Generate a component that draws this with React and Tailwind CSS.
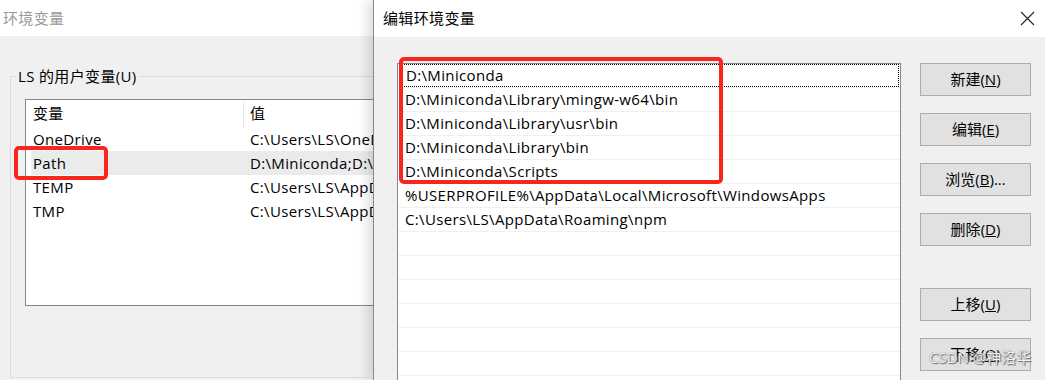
import { useState } from "react";

const FONT = "font-['Open_Sans','Noto_Sans_CJK_SC',sans-serif]";

const userVars = [
  { name: "OneDrive", value: "C:\\Users\\LS\\OneDrive" },
  { name: "Path", value: "D:\\Miniconda;D:\\Miniconda\\Library\\mingw-w64\\bin" },
  { name: "TEMP", value: "C:\\Users\\LS\\AppData\\Local\\Temp" },
  { name: "TMP", value: "C:\\Users\\LS\\AppData\\Local\\Temp" },
];

const pathEntries = [
  "D:\\Miniconda",
  "D:\\Miniconda\\Library\\mingw-w64\\bin",
  "D:\\Miniconda\\Library\\usr\\bin",
  "D:\\Miniconda\\Library\\bin",
  "D:\\Miniconda\\Scripts",
  "%USERPROFILE%\\AppData\\Local\\Microsoft\\WindowsApps",
  "C:\\Users\\LS\\AppData\\Roaming\\npm",
  "", "", "", "", "", "", "",
];

// label with an underlined access key, e.g. 新建(N)
const Btn = ({ label, hotkey, tail = "", className = "" }) => (
  <button
    className={`h-[33px] w-[111px] border border-[#adadad] bg-[#e1e1e1] text-[15px] text-black ${className}`}
  >
    {label}(<u>{hotkey}</u>){tail}
  </button>
);

export default function App() {
  const [selected] = useState(0);

  return (
    <div className={`relative flex h-[380px] w-[1045px] overflow-hidden bg-[#f0f0f0] tracking-[0.35px] ${FONT}`}>
      {/* environment variables window (behind) */}
      <div className="flex w-[373px] shrink-0 flex-col overflow-hidden">
        <div className="flex h-[36px] shrink-0 items-center bg-white pl-[3px] text-[15px] text-[#999999]">
          环境变量
        </div>
        <div className="flex-1 bg-[#f0f0f0] pl-[10px] pt-[30px]">
          <fieldset className="h-[312px] w-[420px] border border-[#dcdcdc]">
            <legend className="ml-[5px] px-[2px] text-[15px] leading-[20px] text-black">
              LS 的用户变量(U)
            </legend>
            <div className="ml-[14px] mt-[13px] h-[207px] w-[420px] overflow-hidden border border-[#828790] bg-white text-[15px] text-black">
              <div className="flex h-[27px] items-center">
                <div className="w-[217px] shrink-0 pl-[7px]">变量</div>
                <div className="h-[26px] w-px shrink-0 bg-[#e5e5e5]" />
                <div className="pl-[6px]">值</div>
              </div>
              {userVars.map((v) => (
                <div
                  key={v.name}
                  className={`ml-[5px] flex h-[24px] items-center whitespace-nowrap ${
                    v.name === "Path" ? "bg-[#ebebeb]" : ""
                  }`}
                >
                  <div className="w-[217px] shrink-0 pl-[2px]">{v.name}</div>
                  <div className="pl-[2px]">{v.value}</div>
                </div>
              ))}
            </div>
          </fieldset>
        </div>
      </div>

      {/* edit environment variable window (front) */}
      <div className="relative flex flex-1 flex-col border-l border-[#888888] bg-[#f0f0f0] shadow-[-6px_0_10px_rgba(0,0,0,0.12)]">
        <div className="flex h-[37px] shrink-0 items-center justify-between bg-white pl-[9px] pr-[10px] text-[15px] text-black">
          <span>编辑环境变量</span>
          <svg width="15" height="15" viewBox="0 0 15 15" className="text-[#222]">
            <path d="M1 1 L14 14 M14 1 L1 14" stroke="currentColor" strokeWidth="1.1" />
          </svg>
        </div>
        <div className="flex flex-1 pl-[23px] pt-[26px]">
          <div className="w-[504px] border-x border-t border-[#828790] bg-white text-[15px] text-black">
            {pathEntries.map((p, i) => (
              <div key={i} className="h-[24px] border-b border-[#f0f0f0] px-px">
                <div
                  className={`flex h-[23px] items-center whitespace-nowrap pl-[6px] ${
                    i === selected ? "border border-dotted border-black pl-[5px]" : ""
                  }`}
                >
                  {p}
                </div>
              </div>
            ))}
          </div>
          <div className="ml-[19px] flex flex-col tracking-normal">
            <Btn label="新建" hotkey="N" />
            <Btn label="编辑" hotkey="E" className="mt-[17px]" />
            <Btn label="浏览" hotkey="B" tail="..." className="mt-[17px]" />
            <Btn label="删除" hotkey="D" className="mt-[17px]" />
            <Btn label="上移" hotkey="U" className="mt-[42px]" />
            <Btn label="下移" hotkey="O" className="mt-[17px]" />
          </div>
        </div>
      </div>

      {/* red annotation boxes */}
      <div className="absolute left-[14px] top-[146px] h-[34px] w-[94px] rounded-[5px] border-[4px] border-[#f8261d]" />
      <div className="absolute left-[399px] top-[57px] h-[127px] w-[324px] rounded-[5px] border-[4px] border-[#f8261d]" />

      {/* watermark */}
      <div className="absolute left-[929px] top-[347px] text-[15px] leading-[20px] tracking-normal text-[#f2f2f2] [text-shadow:1px_1px_1px_#6a6a6a,0_0_1px_#555]">
        CSDN @神洛华
      </div>
    </div>
  );
}
